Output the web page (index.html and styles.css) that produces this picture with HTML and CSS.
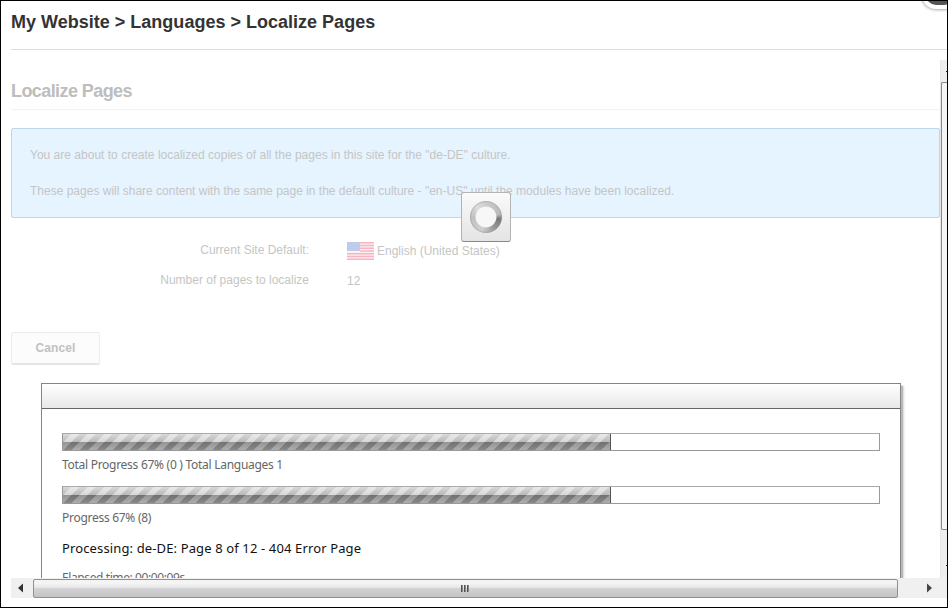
FILE: index.html
```html
<!DOCTYPE html>
<html lang="en">
<head>
<meta charset="utf-8">
<title>Localize Pages</title>
<link rel="stylesheet" href="styles.css">
</head>
<body>
<div class="window">
  <h1 class="crumbs"><span>My Website &gt; Languages &gt; Localize Pages</span></h1>
  <span class="close-button"></span>
  <div class="frame">
    <div class="view">
      <main class="content">
        <h2>Localize Pages</h2>
        <div class="message">
          <p class="intro">You are about to create localized copies of all the pages in this site for the "de-DE" culture.</p>
          <p class="share">These pages will share content with the same page in the default culture - "en-US" until the modules have been localized.</p>
        </div>
        <div class="fields">
          <span class="label site">Current Site Default:</span>
          <span class="value">
            <svg class="flag" width="27" height="18" viewBox="0 0 27 18">
              <path fill="#fdeef1" d="M0 0h27v18H0z"/>
              <path stroke="#f5b6c3" stroke-width="1.4" d="M0 .7h27M0 3.5h27M0 6.3h27M0 9h27M0 11.8h27M0 14.5h27M0 17.3h27"/>
              <path fill="#bdc9e8" d="M0 0h13v9H0z"/>
              <path stroke="#c9d2ec" stroke-dasharray="1 1" d="M1 1.5h11M2 3.5h10M1 5.5h11M2 7.5h10"/>
              <path fill="#fff6f8" d="M0 9h13v1H0z"/>
            </svg>
            <span class="country">English (United States)</span>
          </span>
          <span class="label pages">Number of pages to localize</span>
          <span class="value count">12</span>
        </div>
        <button class="cancel" type="button">Cancel</button>
      </main>
      <section class="progress-panel">
        <header></header>
        <div class="progress-body">
          <div class="bar"><div class="fill" style="width:67%"></div></div>
          <p class="status total">Total Progress 67% (0 ) Total Languages 1</p>
          <div class="bar"><div class="fill" style="width:67%"></div></div>
          <p class="status partial">Progress 67% (8)</p>
          <p class="processing">Processing: de-DE: Page 8 of 12 - 404 Error Page</p>
          <p class="status elapsed">Elapsed time: 00:00:09s</p>
        </div>
      </section>
      <div class="loader">
        <span class="ring"></span>
      </div>
    </div>
    <div class="vscroll"><span class="tick"></span><div class="vthumb"></div><span class="tick"></span></div>
    <div class="hscroll">
      <svg width="22" height="20" viewBox="0 0 22 20"><path fill="#333" d="M7 10l5-4.500v9z"/></svg>
      <div class="hthumb"><i></i><i></i><i></i></div>
      <svg class="right" width="42" height="20" viewBox="0 0 42 20"><path fill="#444" d="M34 10l-5-4.500v9z"/></svg>
    </div>
  </div>
</div>
</body>
</html>
```

FILE: styles.css
```css
* { box-sizing: border-box; }
body { margin: 0; background: #fff; font: 12px/18px "Liberation Sans", Arial, sans-serif; }
h1, h2, p { margin: 0; }
.window { position: relative; width: 948px; height: 608px; border: 1px solid #000; overflow: hidden; }
.crumbs { margin-left: 10px; height: 49px; padding-top: 10px; border-bottom: 1px solid #ddd; font-size: 18px; line-height: 22px; letter-spacing: .01px; color: #333; white-space: nowrap; }
.close-button { position: absolute; top: -20px; right: -11px; width: 36px; height: 28px; border: 4px solid #fff; border-radius: 14px; background: #555; box-shadow: 0 0 3px 1px #aaa; }
.frame { display: grid; grid-template: 518px 20px / 929px 7px; margin: 10px 0 0 10px; }
.view { position: relative; overflow: hidden; }
.content { height: 323px; color: #c5c5c5; }
h2 { height: 50px; padding-top: 20px; border-bottom: 1px solid #f3f3f3; color: #bdbdbd; font-size: 18px; line-height: 22px; letter-spacing: -.58px; }
.message { height: 90px; margin-top: 18px; padding: 17px 18px; border: 1px solid #bcd6ed; border-radius: 2px; background: #e5f4ff; white-space: nowrap; }
.intro { letter-spacing: .01px; }
.share { margin-top: 18px; }
.fields { display: grid; grid-template-columns: 298px 1fr; grid-auto-rows: 30px; column-gap: 38px; margin-top: 23px; }
.label { text-align: right; }
.value { display: flex; height: 20px; gap: 3px; align-items: center; }
.cancel { display: block; width: 89px; height: 33px; margin-top: 31px; padding: 0; border: 1px solid #ececec; border-bottom: 2px solid #e5e5e5; border-radius: 2px; background: #fcfcfc; color: #c1c1c1; font: bold 12px "Liberation Sans", Arial, sans-serif; letter-spacing: .1px; }
.progress-panel { width: 860px; height: 230px; margin-left: 30px; border: 1px solid #858585; background: #fff; box-shadow: 2px 3px 1px #b9b9b9, 3px 3px 2px #ddd; }
.progress-panel header { height: 25px; border-bottom: 1px solid #666; background: linear-gradient(#fff, #e8e8e8); }
.progress-body { padding: 24px 20px 0; font-family: "Noto Sans", sans-serif; white-space: nowrap; }
.bar { height: 18px; border: 1px solid #999; border-top-color: #aaa; }
.fill { box-sizing: content-box; height: 16px; border-right: 1px solid #555; background: linear-gradient(transparent 50%, rgba(110,110,110,.45) 50%, rgba(130,130,130,.3)), repeating-linear-gradient(135deg, transparent 0 5.500px, rgba(255,255,255,.45) 6px 11.300px, transparent 11.700px), linear-gradient(#d8d8d8 0, #b8b8b8 50%, #747474 50%, #8c8c8c 100%); }
.status { font-size: 12px; line-height: 18px; letter-spacing: -.28px; color: #666; }
.total { height: 35px; padding-top: 5px; }
.partial { padding-top: 5px; }
.processing { margin-top: 11px; color: #111; font-size: 13px; line-height: 20px; letter-spacing: .13px; }
.elapsed { margin-top: 11px; letter-spacing: -.4px; }
.loader { position: absolute; left: 450px; top: 132px; width: 50px; height: 50px; border: 1px solid #b4b4b4; border-bottom-color: #888; border-radius: 3px; background: linear-gradient(#fafafa, #e4e4e4); }
.ring { display: block; width: 32px; height: 32px; margin: 8px; border-radius: 50%; background: radial-gradient(circle, #f7f7f7 0 9.800px, transparent 11px 14px, rgba(150,150,150,.55) 16px), conic-gradient(#ccc 0, #bbb 22%, #777 27%, #999 40%, #d0d0d0 55%, #c1c1c1 75%, #ddd 88%, #ccc); }
.vscroll { display: flex; flex-direction: column; height: 518px; padding-top: 11px; background: #eee; border-left: 1px solid #e5e5e5; }
.vthumb { width: 6px; height: 448px; margin: 10px 0 35px 0; border: 1px solid #888; border-right: 0; border-radius: 2px 0 0 2px; background: #f5f5f5; }
.tick { width: 1px; height: 1px; margin-left: 5px; background: #222; }
.hscroll { grid-column: 1 / -1; display: flex; background: #f0f0f0; }
.hscroll svg { flex: none; }
.hthumb { display: flex; justify-content: center; gap: 1px; width: 865px; height: 19px; padding: 5px 2px 0 0; margin-top: 1px; border: 1px solid #909090; border-radius: 2px; background: linear-gradient(#f4f4f4 0 20%, #e6e6e6 45%, #d3d3d5 50%, #c4c4c6); }
.hthumb i { width: 2px; height: 7px; background: linear-gradient(90deg, #333, #aaa); }
```
